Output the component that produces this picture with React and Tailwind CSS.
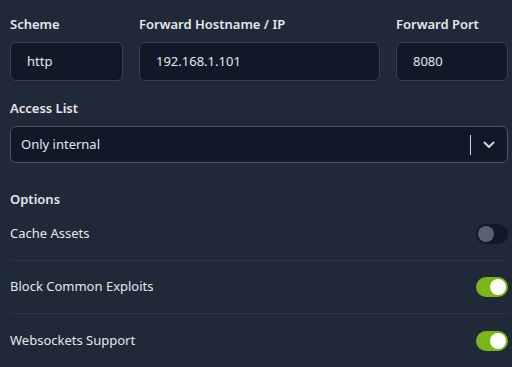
import React from "react";

function Toggle({ on }) {
  return (
    <div
      className={
        "flex h-[20px] w-[32px] items-center rounded-full px-[2px] " +
        (on ? "justify-end bg-[#7cb518]" : "justify-start bg-[#111827]")
      }
    >
      <div
        className={
          "h-[16px] w-[16px] rounded-full " + (on ? "bg-white" : "bg-[#5b6170]")
        }
      />
    </div>
  );
}

function Label({ children }) {
  return (
    <div className="h-[18px] text-[13px] font-semibold leading-[18px] text-[#e5e7eb]">
      {children}
    </div>
  );
}

function Input({ value, w }) {
  return (
    <div
      className={
        "flex h-[39px] items-center rounded-[6px] border border-[#374151] bg-[#111827] pl-[16px] text-[13px] text-[#e5e7eb] " +
        w
      }
    >
      {value}
    </div>
  );
}

export default function App() {
  return (
    <div
      className="h-[367px] w-[512px] overflow-hidden bg-[#1f2937] pl-[10px] pr-[4px] pt-[15px]"
      style={{ fontFamily: '"Noto Sans", "Open Sans", sans-serif' }}
    >
      <div className="flex gap-[16px]">
        <div className="flex flex-col gap-[9px]">
          <Label>Scheme</Label>
          <Input value="http" w="w-[113px]" />
        </div>
        <div className="flex flex-col gap-[9px]">
          <Label>Forward Hostname / IP</Label>
          <Input value="192.168.1.101" w="w-[241px]" />
        </div>
        <div className="flex flex-col gap-[9px]">
          <Label>Forward Port</Label>
          <Input value="8080" w="w-[112px]" />
        </div>
      </div>

      <div className="mt-[18px] flex flex-col gap-[9px]">
        <Label>Access List</Label>
        <div className="flex h-[37px] items-center rounded-[6px] border border-[#4b5563] bg-[#111827] pl-[10px] text-[13px] text-[#e5e7eb]">
          <span className="flex-1">Only internal</span>
          <div className="h-[20px] w-px bg-[#d1d5db]" />
          <div className="flex w-[36px] items-center justify-center">
            <svg width="12" height="8" viewBox="0 0 12 8" fill="none">
              <path d="M1.5 1.5 L6 6 L10.5 1.5" stroke="#d1d5db" strokeWidth="2" strokeLinecap="round" strokeLinejoin="round" />
            </svg>
          </div>
        </div>
      </div>

      <div className="mt-[27px]">
        <Label>Options</Label>
      </div>
      <div className="flex flex-col">
        {[
          ["Cache Assets", false],
          ["Block Common Exploits", true],
          ["Websockets Support", true],
        ].map(([t, on], i) => (
          <div
            key={t}
            className={
              "flex h-[53px] items-center justify-between text-[13px] text-[#e5e7eb] " +
              (i < 2 ? "border-b border-[#2b3545]" : "")
            }
          >
            <span>{t}</span>
            <Toggle on={on} />
          </div>
        ))}
      </div>
    </div>
  );
}
